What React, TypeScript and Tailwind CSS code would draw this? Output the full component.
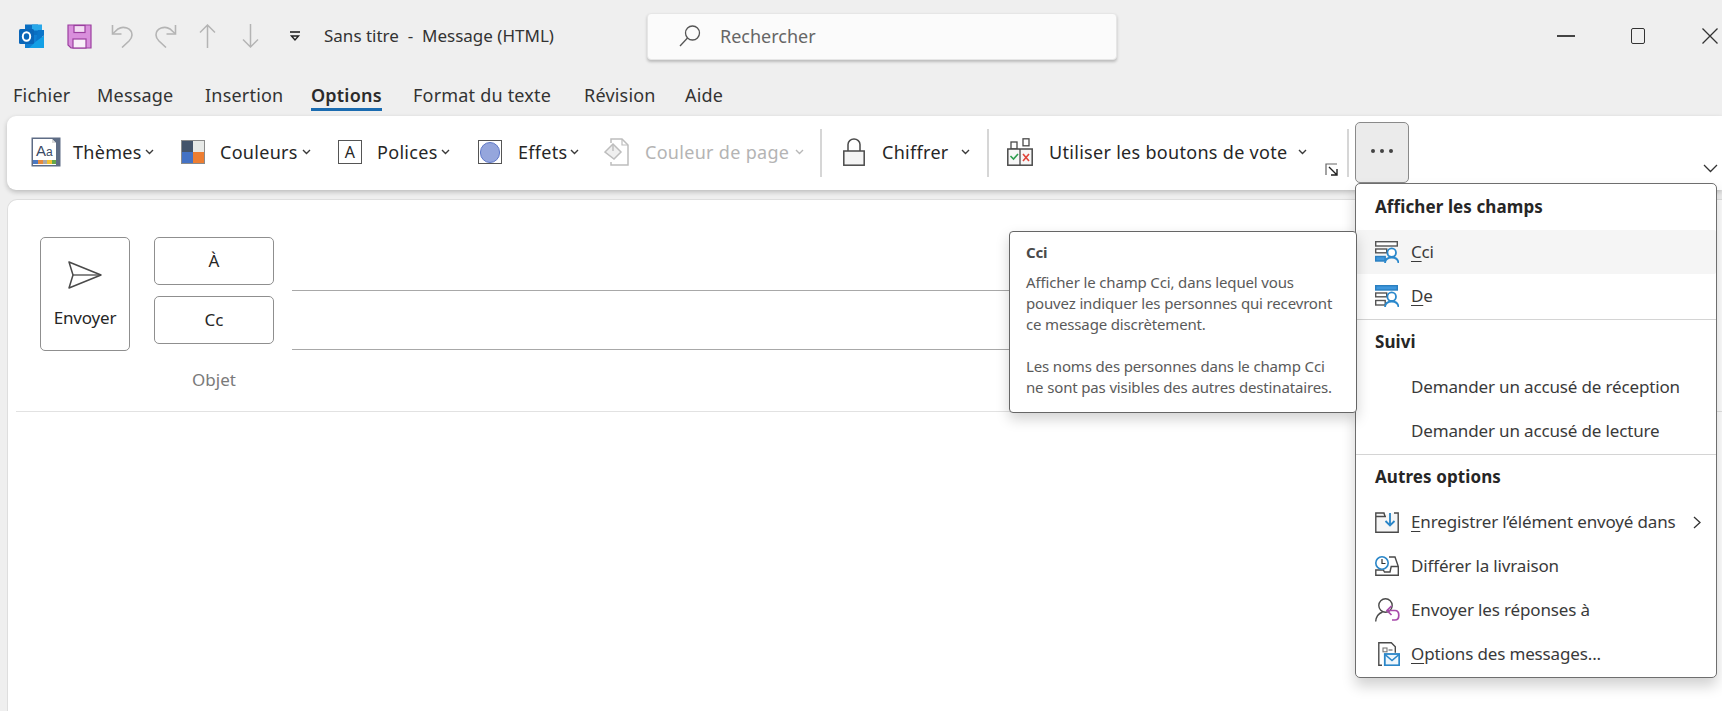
const Chevron = ({ muted = false }: { muted?: boolean }) => (
  <svg width="9" height="6" viewBox="0 0 9 6" fill="none" className="shrink-0">
    <path d="M1 1l3.5 3.5L8 1" stroke={muted ? "#b8b8b8" : "#3a3a3a"} strokeWidth="1.4" />
  </svg>
);

const OutlookIcon = () => (
  <svg width="25" height="25" viewBox="0 0 25 25">
    <rect x="6" y="0.5" width="13" height="11" fill="#0a6fc2" />
    <rect x="13" y="0.5" width="10" height="6" fill="#28a8ea" />
    <rect x="6" y="11" width="17" height="13" fill="#0f7fd3" />
    <path d="M10 24h15V11.5l-8 6z" fill="#14a0e6" />
    <path d="M17 17l8-5.5V6l-6 0z" fill="#0b75c9" />
    <rect x="0" y="5" width="15" height="15" rx="1.5" fill="#0b66b8" />
    <ellipse cx="7.5" cy="12.5" rx="3.7" ry="4.3" fill="none" stroke="#fff" strokeWidth="2" />
  </svg>
);

const SaveIcon = () => (
  <svg width="25" height="25" viewBox="0 0 25 25">
    <path d="M1 1h23v23H4l-3-3z" fill="#d98fdc" stroke="#9b3f9f" strokeWidth="1.2" />
    <rect x="7" y="1.5" width="11" height="7" fill="#f3ddf3" stroke="#9b3f9f" strokeWidth="1.2" />
    <rect x="6" y="15" width="13" height="9" fill="#f9eff9" stroke="#9b3f9f" strokeWidth="1.2" />
  </svg>
);

const UndoIcon = ({ flip = false }: { flip?: boolean }) => (
  <svg width="23" height="24" viewBox="0 0 23 24" fill="none" className={flip ? "-scale-x-100" : ""}>
    <path d="M1.5 1v9h9" stroke="#b4b4b4" strokeWidth="1.6" />
    <path d="M2 9.5l5-4.5c5-3.5 14-1 14 6 0 3-1.5 4.5-3 6L11 23.5" stroke="#b4b4b4" strokeWidth="1.6" />
  </svg>
);

const ArrowIcon = ({ down = false }: { down?: boolean }) => (
  <svg width="17" height="24" viewBox="0 0 17 24" fill="none" className={down ? "rotate-180" : ""}>
    <path d="M8.5 24V1M1 8.5l7.5-7.5L16 8.5" stroke="#b4b4b4" strokeWidth="1.5" />
  </svg>
);

const ThemesIcon = () => (
  <svg width="30" height="30" viewBox="0 0 30 30">
    <rect x="0.5" y="0.5" width="29" height="29" fill="#5e6c85" />
    <path d="M2 2h19l4 4v22H2z" fill="#fff" />
    <path d="M21 2v4h4" fill="#d8d8d8" />
    <text x="5" y="19" fontSize="15" fill="#3a4a66" fontFamily="Liberation Sans">A</text>
    <text x="15" y="19" fontSize="12" fill="#3a4a66" fontFamily="Liberation Sans">a</text>
    <rect x="2" y="23" width="5" height="4" fill="#4a78c2" />
    <rect x="7" y="23" width="5" height="4" fill="#e88a3c" />
    <rect x="12" y="23" width="4" height="4" fill="#a9a9a9" />
    <rect x="16" y="23" width="5" height="4" fill="#f2c230" />
    <rect x="21" y="23" width="4" height="4" fill="#66a84a" />
  </svg>
);

const ColorsIcon = () => (
  <div className="grid h-[24px] w-[24px] shrink-0 grid-cols-2 border border-[#8a8a8a]">
    <div className="bg-[#44546a]" />
    <div className="bg-[#e7e9e7]" />
    <div className="bg-[#4472c4]" />
    <div className="bg-[#ed7d31]" />
  </div>
);

const PageColorIcon = () => (
  <svg width="25" height="28" viewBox="0 0 25 28" fill="none">
    <path d="M7 5V1h11l6 6v20H7v-3" stroke="#bdbdbd" strokeWidth="1.5" />
    <path d="M18 1v6h6" stroke="#bdbdbd" strokeWidth="1.2" />
    <path d="M1 14l8-8 8 8-7 7z" fill="#efefef" stroke="#bdbdbd" strokeWidth="1.5" />
    <path d="M9 6v7" stroke="#bdbdbd" strokeWidth="1.4" />
  </svg>
);

const LockIcon = () => (
  <svg width="22" height="28" viewBox="0 0 22 28" fill="none">
    <rect x="0.8" y="13" width="20.4" height="14.2" fill="#f4f4f4" stroke="#4a4a4a" strokeWidth="1.5" />
    <path d="M5 13V6.5a6 5.5 0 0 1 12 0V13" stroke="#4a4a4a" strokeWidth="1.5" />
  </svg>
);

const VoteIcon = () => (
  <svg width="26" height="28" viewBox="0 0 26 28" fill="none">
    <rect x="4" y="4" width="6" height="7" stroke="#4a4a4a" strokeWidth="1.3" />
    <rect x="16" y="0.8" width="6" height="7" stroke="#4a4a4a" strokeWidth="1.3" />
    <rect x="0.8" y="11" width="24.4" height="16.2" fill="#f7f7f7" stroke="#4a4a4a" strokeWidth="1.5" />
    <path d="M13 11v16" stroke="#4a4a4a" strokeWidth="1.3" />
    <path d="M3.5 18l3 3 4.5-5" stroke="#2e9e4f" strokeWidth="1.6" />
    <path d="M16 16l6 7M22 16l-6 7" stroke="#e0453a" strokeWidth="1.6" />
  </svg>
);

const FieldIcon = ({ top = false }: { top?: boolean }) => {
  const on = "#3f97dc";
  const off = "#ffffff";
  return (
    <svg width="24" height="22" viewBox="0 0 24 22" fill="none" className="shrink-0">
      <rect x="0.7" y="0.7" width="21.600" height="4.300" fill={top ? on : off} stroke={top ? "#2a7fc0" : "#555"} strokeWidth="1.4" />
      <rect x="0.7" y="8" width="11" height="3.800" fill="#fff" stroke="#555" strokeWidth="1.4" />
      <rect x="0.7" y="15.500" width="9.500" height="4.500" fill={top ? off : on} stroke={top ? "#555" : "#2a7fc0"} strokeWidth="1.4" />
      <circle cx="16.700" cy="11.700" r="4.300" stroke="#2a88cc" strokeWidth="1.800" fill="#fff" />
      <path d="M10 22c.3-3.500 3-5.500 6.700-5.500S23.200 18.500 23.500 22" stroke="#2a88cc" strokeWidth="1.800" />
    </svg>
  );
};

const SaveToIcon = () => (
  <svg width="24" height="21" viewBox="0 0 24 21" fill="none" className="shrink-0">
    <path d="M.8 4.500V1H9l1 3.500M.8 4.500H11v0M.8 4.500v15.700h22.400V1H19" fill="#f6f6f6" stroke="#4a4a4a" strokeWidth="1.400" />
    <path d="M15 1v12.500M10.500 9l4.500 4.500L19.500 9" stroke="#2a86c8" strokeWidth="1.800" />
  </svg>
);

const DeferIcon = () => (
  <svg width="24" height="20" viewBox="0 0 24 20" fill="none" className="shrink-0">
    <path d="M14 1h6l3.300 9.500v8.800H.8V14h7.500l1.200 2h5.500l1.200-5.500h7.500" stroke="#4a4a4a" strokeWidth="1.400" />
    <circle cx="7" cy="7" r="6.200" fill="#fff" stroke="#2a86c8" strokeWidth="1.600" />
    <path d="M7 3v4.500h3.500" stroke="#333" strokeWidth="1.200" />
  </svg>
);

const ReplyToIcon = () => (
  <svg width="25" height="24" viewBox="0 0 25 24" fill="none" className="shrink-0">
    <circle cx="10.500" cy="7.500" r="6.700" stroke="#4a4a4a" strokeWidth="1.400" />
    <path d="M.7 23.500c.3-4.500 2.800-8 6.800-9.500" stroke="#4a4a4a" strokeWidth="1.400" />
    <path d="M12 12.500h8c2.500 0 3.800 2 3.800 4.700s-1.300 4.800-3.800 4.800h-3" stroke="#a84aaa" strokeWidth="1.700" />
    <path d="M16.500 8l-4.500 4.500 4.500 4.500" stroke="#a84aaa" strokeWidth="1.700" />
  </svg>
);

const MsgOptionsIcon = () => (
  <svg width="22" height="24" viewBox="0 0 22 24" fill="none" className="shrink-0">
    <path d="M4 23.300H.8V.8h12.500l4 4v6" stroke="#4a4a4a" strokeWidth="1.400" />
    <rect x="5" y="6" width="4" height="3.800" stroke="#777" strokeWidth="1.100" />
    <path d="M10.500 8h4" stroke="#777" strokeWidth="1.300" />
    <rect x="6.800" y="12" width="14.400" height="11.300" fill="#eef6fc" stroke="#2a86c8" strokeWidth="1.800" />
    <path d="M7 12.500l7 6 7-6" stroke="#2a86c8" strokeWidth="1.600" />
  </svg>
);

const MenuRow = ({ icon, children }: { icon?: React.ReactNode; children: React.ReactNode }) => (
  <div className="flex h-[44px] shrink-0 items-center pl-[19px]">
    <div className="flex w-[36px] shrink-0 items-center">{icon}</div>
    <span>{children}</span>
  </div>
);

export default function App() {
  return (
    <div className="relative flex h-[711px] w-[1722px] flex-col overflow-hidden bg-[#efefef] font-['Noto_Sans','Open_Sans',sans-serif] text-[#262626]">
      {/* Title bar */}
      <div className="flex h-[72px] shrink-0 items-center pl-[19px]">
        <div className="flex w-[48px] items-center"><OutlookIcon /></div>
        <div className="flex w-[44px] items-center"><SaveIcon /></div>
        <div className="flex w-[43px] items-center"><UndoIcon /></div>
        <div className="flex w-[45px] items-center"><UndoIcon flip /></div>
        <div className="flex w-[43px] items-center"><ArrowIcon /></div>
        <div className="flex w-[47px] items-center"><ArrowIcon down /></div>
        <div className="flex w-[35px] items-center">
          <svg width="12" height="11" viewBox="0 0 12 11" fill="none">
            <path d="M1 1h10" stroke="#222" strokeWidth="1.600" />
            <path d="M2.500 5l3.500 4 3.500-4z" stroke="#222" strokeWidth="1.400" />
          </svg>
        </div>
        <div className="w-[323px] whitespace-pre text-[17px] text-[#333]">Sans titre  -  Message (HTML)</div>
        <div className="flex h-[47px] w-[470px] items-center rounded-[4px] border border-[#e6e6e6] bg-[#fbfbfb] pl-[31px] shadow-[0_2px_3px_rgba(0,0,0,0.22)]">
          <svg width="22" height="22" viewBox="0 0 22 22" fill="none" className="mr-[19px]">
            <circle cx="13.500" cy="8" r="7" stroke="#555" strokeWidth="1.300" />
            <path d="M8.500 13L1 21" stroke="#555" strokeWidth="1.300" />
          </svg>
          <span className="text-[18px] text-[#666]">Rechercher</span>
        </div>
        <div className="ml-[440px] flex items-center">
          <div className="h-[2px] w-[18px] bg-[#444]" />
          <div className="ml-[56px] h-[16px] w-[14px] rounded-[2px] border-[1.5px] border-[#333]" />
          <svg width="16" height="16" viewBox="0 0 16 16" fill="none" className="ml-[57px]">
            <path d="M0.500 0.500l15 15M15.500 0.500l-15 15" stroke="#333" strokeWidth="1.300" />
          </svg>
        </div>
      </div>

      {/* Tabs */}
      <div className="flex h-[44px] shrink-0 items-start pl-[13px] pt-[11px] text-[18px] leading-[24px] tracking-[0.2px] text-[#333]">
        <div className="w-[84px]">Fichier</div>
        <div className="w-[108px]">Message</div>
        <div className="w-[106px]">Insertion</div>
        <div className="w-[102px]">
          <span className="inline-block border-b-[3px] border-[#1a6bb0] pb-[1px] font-semibold text-[#2b2b2b]">Options</span>
        </div>
        <div className="w-[171px]">Format du texte</div>
        <div className="w-[101px]">Révision</div>
        <div>Aide</div>
      </div>

      {/* Ribbon */}
      <div className="ml-[7px] flex h-[74px] shrink-0 items-center rounded-l-[9px] bg-white pb-[2px] pl-[24px] text-[18px] tracking-[0.3px] shadow-[0_2px_5px_rgba(0,0,0,0.22)]">
        <div className="flex w-[150px] items-center">
          <ThemesIcon />
          <span className="ml-[12px] w-[72px]">Thèmes</span>
          <Chevron />
        </div>
        <div className="flex w-[157px] items-center">
          <ColorsIcon />
          <span className="ml-[15px] w-[82px]">Couleurs</span>
          <Chevron />
        </div>
        <div className="flex w-[140px] items-center">
          <div className="flex h-[24px] w-[24px] items-center justify-center border border-[#555] text-[16px]">A</div>
          <span className="ml-[15px] w-[64px]">Polices</span>
          <Chevron />
        </div>
        <div className="flex w-[126px] items-center">
          <div className="flex h-[24px] w-[24px] items-center justify-center border border-[#555]">
            <div className="h-[21px] w-[20px] rounded-full border border-[#5f78c8] bg-[#95a6dc]" />
          </div>
          <span className="ml-[16px] w-[52px]">Effets</span>
          <Chevron />
        </div>
        <div className="flex w-[216px] items-center text-[#b4b4b4]">
          <PageColorIcon />
          <span className="ml-[16px] w-[150px]">Couleur de page</span>
          <Chevron muted />
        </div>
        <div className="flex w-[167px] items-center">
          <div className="mt-[2px] h-[48px] w-[2px] bg-[#d6d6d6]" />
          <div className="ml-[21px] flex"><LockIcon /></div>
          <span className="ml-[17px] w-[79px]">Chiffrer</span>
          <Chevron />
        </div>
        <div className="flex w-[360px] items-center">
          <div className="mt-[2px] h-[48px] w-[2px] bg-[#d6d6d6]" />
          <div className="ml-[18px] flex"><VoteIcon /></div>
          <span className="ml-[16px] w-[249px]">Utiliser les boutons de vote</span>
          <Chevron />
          <svg width="13" height="13" viewBox="0 0 13 13" fill="none" className="ml-[18px] mt-[35px]">
            <path d="M12 1H1v11" stroke="#666" strokeWidth="1.200" />
            <path d="M4 4l7.500 7.500M12 6v6H6" stroke="#222" strokeWidth="1.400" />
          </svg>
        </div>
        <div className="mt-[2px] h-[48px] w-[2px] bg-[#d6d6d6]" />
        <div className="mb-[5px] ml-[6px] flex h-[61px] w-[54px] items-center justify-center gap-[5px] self-end rounded-[5px] border border-[#8a8a8a] bg-[#ebebeb] pb-[4px]">
          <div className="h-[4px] w-[4px] rounded-full bg-[#444]" />
          <div className="h-[4px] w-[4px] rounded-full bg-[#444]" />
          <div className="h-[4px] w-[4px] rounded-full bg-[#444]" />
        </div>
        <svg width="15" height="9" viewBox="0 0 15 9" fill="none" className="ml-[294px] mt-[32px]">
          <path d="M1 1l6.500 6.500L14 1" stroke="#333" strokeWidth="1.300" />
        </svg>
      </div>

      {/* Compose area */}
      <div className="ml-[7px] mt-[9px] flex-1 rounded-tl-[10px] border-l border-t border-[#dedede] bg-white">
        <div className="ml-[8px] border-b border-[#e2e2e2] pl-[24px] pt-[37px]">
          <div className="flex">
            <div className="flex h-[114px] w-[90px] shrink-0 flex-col items-center rounded-[5px] border border-[#8f8f8f] pt-[23px]">
              <svg width="34" height="28" viewBox="0 0 34 28" fill="none">
                <path d="M1 1l32 13L1 27l4-13z" stroke="#4a4a4a" strokeWidth="1.500" strokeLinejoin="round" />
                <path d="M5 14h28" stroke="#4a4a4a" strokeWidth="1.300" />
              </svg>
              <span className="mt-[18px] text-[17px] leading-[22px] tracking-[-0.2px]">Envoyer</span>
            </div>
            <div className="ml-[24px] flex w-[120px] shrink-0 flex-col gap-[11px]">
              <div className="flex h-[48px] items-center justify-center rounded-[5px] border border-[#8f8f8f] text-[17px]">À</div>
              <div className="flex h-[48px] items-center justify-center rounded-[5px] border border-[#8f8f8f] text-[17px]">Cc</div>
            </div>
            <div className="ml-[18px] mr-[30px] flex-1">
              <div className="h-[54px] border-b border-[#a8a8a8]" />
              <div className="h-[59px] border-b border-[#a8a8a8]" />
            </div>
          </div>
          <div className="ml-[114px] flex h-[60px] w-[120px] items-center justify-center pb-[2px] text-[17px] text-[#7a7a7a]">Objet</div>
        </div>
      </div>

      {/* Overflow menu */}
      <div className="absolute left-[1355px] top-[183px] z-10 flex h-[495px] w-[362px] flex-col rounded-[5px] border border-[#6e6e6e] bg-white text-[17px] tracking-[-0.15px] text-[#3a3a3a] shadow-[0_8px_14px_rgba(0,0,0,0.18)]">
        <div className="flex h-[46px] shrink-0 items-center pl-[19px] font-bold tracking-[0.1px] text-[#262626]">Afficher les champs</div>
        <div className="rounded-[2px] bg-[#f5f5f5]">
          <MenuRow icon={<FieldIcon />}><span className="underline decoration-1 underline-offset-[3px]">C</span>ci</MenuRow>
        </div>
        <MenuRow icon={<FieldIcon top />}><span className="underline decoration-1 underline-offset-[3px]">D</span>e</MenuRow>
        <div className="mt-[1px] h-[1px] shrink-0 bg-[#d4d4d4]" />
        <div className="flex h-[45px] shrink-0 items-center pb-[1px] pl-[19px] font-bold tracking-[0.1px] text-[#262626]">Suivi</div>
        <MenuRow>Demander un accusé de réception</MenuRow>
        <MenuRow>Demander un accusé de lecture</MenuRow>
        <div className="mt-[1px] h-[1px] shrink-0 bg-[#d4d4d4]" />
        <div className="flex h-[45px] shrink-0 items-center pb-[1px] pl-[19px] font-bold tracking-[0.1px] text-[#262626]">Autres options</div>
        <div className="flex items-center justify-between pr-[14px]">
          <MenuRow icon={<SaveToIcon />}><span className="underline decoration-1 underline-offset-[3px]">E</span>nregistrer l’élément envoyé dans</MenuRow>
          <svg width="9" height="13" viewBox="0 0 9 13" fill="none">
            <path d="M1 1l6 5.500L1 12" stroke="#333" strokeWidth="1.300" />
          </svg>
        </div>
        <MenuRow icon={<DeferIcon />}>Différer la livraison</MenuRow>
        <MenuRow icon={<ReplyToIcon />}>Envoyer les réponses à</MenuRow>
        <MenuRow icon={<div className="ml-[3px] flex"><MsgOptionsIcon /></div>}><span className="underline decoration-1 underline-offset-[3px]">O</span>ptions des messages...</MenuRow>
      </div>

      {/* Tooltip */}
      <div className="absolute left-[1009px] top-[231px] z-20 h-[182px] w-[348px] rounded-[4px] border border-[#666] bg-white pl-[16px] pt-[10px] text-[15px] leading-[21px] tracking-[-0.15px] text-[#5a5a5a] shadow-[0_6px_14px_rgba(0,0,0,0.18)]">
        <div className="font-bold text-[#4a4a4a]">Cci</div>
        <p className="mt-[9px]">Afficher le champ Cci, dans lequel vous<br />pouvez indiquer les personnes qui recevront<br />ce message discrètement.</p>
        <p className="mt-[21px]">Les noms des personnes dans le champ Cci<br />ne sont pas visibles des autres destinataires.</p>
      </div>
    </div>
  );
}
